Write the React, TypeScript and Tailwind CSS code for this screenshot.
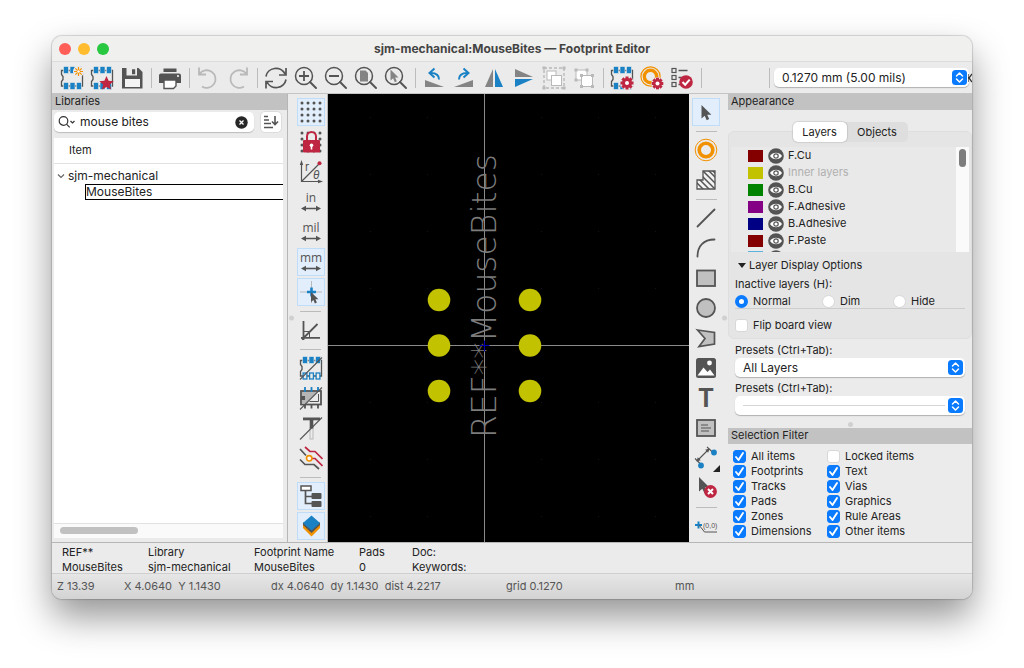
import React from 'react';
import { clsx } from 'clsx';

const DARK = '#545454';
const BLUE = '#1a81c4';
const RED = '#bf2641';
const ORANGE = '#f29100';
const GREY = '#848484';
const PALE = '#b9b9b9';

const Svg: React.FC<{ children: React.ReactNode }> = ({ children }) => (
    <svg viewBox="0 0 24 24" className="size-6 shrink-0" fill="none" aria-hidden="true">
        {children}
    </svg>
);

/* ---------- footprint based icons ---------- */

const Chip: React.FC<{ outline?: boolean }> = ({ outline }) => (
    <>
        <path d="M3 4.5H1.5V8.5L3 10.5V13.5L1.5 15.5V20H22.5V4.5Z" stroke={DARK} strokeWidth="1.3" />
        {[3.5, 10, 16.5].map((x) => (
            <rect key={x} x={x} y="0.5" width="5" height="7" fill={BLUE} stroke="#ebebeb" strokeWidth="0.6" />
        ))}
        {[3.5, 10, 16.5].map((x) =>
            outline ? (
                <rect key={x} x={x + 0.6} y="17" width="3.8" height="6" fill="#ebebeb" stroke={BLUE} strokeWidth="1.3" />
            ) : (
                <rect key={x} x={x} y="16.5" width="5" height="7" fill={BLUE} stroke="#ebebeb" strokeWidth="0.6" />
            )
        )}
    </>
);

const Gear: React.FC<{ x: number; y: number; r: number }> = ({ x, y, r }) => (
    <g transform={`translate(${x} ${y})`}>
        <circle r={r + 0.5} fill="#ebebeb" />
        {[0, 45, 90, 135].map((a) => (
            <rect key={a} x="-1.5" y={-r} width="3" height={r * 2} fill={RED} transform={`rotate(${a})`} />
        ))}
        <circle r={r - 1.6} fill={RED} />
        <circle r="2" fill="#fff" />
    </g>
);

const NewFootprint = () => (
    <Svg>
        <Chip />
        <circle cx="18.5" cy="5.5" r="5.5" fill="#ebebeb" />
        <path d="M18.5 1v9M14 5.5h9M15.3 2.3l6.4 6.4M21.7 2.3l-6.4 6.4" stroke={ORANGE} strokeWidth="1.2" />
        <circle cx="18.5" cy="5.5" r="1.3" fill="#fff" />
    </Svg>
);

const FootprintWizard = () => (
    <Svg>
        <Chip />
        <path
            d="M16.5 10l2.1 4.7 5.1.5-3.8 3.4 1.1 5-4.5-2.6-4.5 2.6 1.1-5-3.8-3.4 5.1-.5z"
            fill={RED}
        />
    </Svg>
);

const Save = () => (
    <Svg>
        <path d="M2 2H18.5L22.5 6V22.5H2Z" fill={DARK} />
        <path d="M6.5 2h10.500v7.500H6.500z" fill="#ebebeb" />
        <path d="M12 3.300h3.200v5H12z" fill={DARK} />
        <path d="M5 13h15v8H5z" fill="#f4f4f4" />
    </Svg>
);

const Print = () => (
    <Svg>
        <path d="M5.500 2.500h13V6h-13z" fill={DARK} />
        <path d="M3 7.500h18a2 2 0 0 1 2 2V17h-5v-3H6v3H1V9.500a2 2 0 0 1 2-2z" fill={DARK} />
        <path d="M6 14h12v6l-2.500 2.500H6z" fill="#fff" stroke={DARK} strokeWidth="1.4" />
        <circle cx="20" cy="10" r="1" fill="#fff" />
    </Svg>
);

const Undo = () => (
    <Svg>
        <path d="M3 1.500V8.500H10M3.500 8A8.800 8.800 0 1 1 6 20.500" stroke={PALE} strokeWidth="1.8" />
    </Svg>
);

const Redo = () => (
    <Svg>
        <path d="M21 1.500V8.500H14M20.500 8A8.800 8.800 0 1 0 18 20.500" stroke={PALE} strokeWidth="1.8" />
    </Svg>
);

const Refresh = () => (
    <Svg>
        <path
            d="M2 10.500A10 9.500 0 0 1 21 8M22 2V9H15M22 13.500A10 9.500 0 0 1 3 16M2 22.500V15.500H9"
            stroke={DARK}
            strokeWidth="1.7"
        />
    </Svg>
);

const Zoom: React.FC<{ children: React.ReactNode }> = ({ children }) => (
    <Svg>
        <circle cx="10" cy="10" r="8.500" stroke={DARK} strokeWidth="1.5" />
        <path d="M16 16l6 6" stroke={DARK} strokeWidth="2" strokeLinecap="round" />
        {children}
    </Svg>
);

const ZoomIn = () => (
    <Zoom>
        <path d="M5 10h10M10 5v10" stroke={DARK} strokeWidth="1.8" />
    </Zoom>
);
const ZoomOut = () => (
    <Zoom>
        <path d="M5 10h10" stroke={DARK} strokeWidth="1.8" />
    </Zoom>
);
const ZoomFit = () => (
    <Zoom>
        <path d="M6 4.500h5.500L14 7v8.500H6z" fill={GREY} />
    </Zoom>
);
const ZoomSelection = () => (
    <Zoom>
        <path d="M6.500 3.500v11l2.600-2.300 1.700 4 2-.9-1.700-3.800h3.400z" fill={GREY} />
    </Zoom>
);

const RotateLeft = () => (
    <Svg>
        <path d="M3 14v7h19z" fill={GREY} />
        <path d="M17 13.500C17 8.500 14 7 9 7" stroke={BLUE} strokeWidth="2" />
        <path d="M12.500 2.500L7.500 7l5 4.500" stroke={BLUE} strokeWidth="2" />
    </Svg>
);
const RotateRight = () => (
    <Svg>
        <path d="M21 14v7H2z" fill={GREY} />
        <path d="M7 13.500C7 8.500 10 7 15 7" stroke={BLUE} strokeWidth="2" />
        <path d="M11.500 2.500l5 4.500-5 4.500" stroke={BLUE} strokeWidth="2" />
    </Svg>
);
const MirrorH = () => (
    <Svg>
        <path d="M11 3v18H3z" fill={GREY} />
        <path d="M13 3v18h8z" fill={BLUE} />
    </Svg>
);
const MirrorV = () => (
    <Svg>
        <path d="M3 11h18L3 3z" fill={GREY} />
        <path d="M3 13h18L3 21z" fill={BLUE} />
    </Svg>
);

const Group = () => (
    <Svg>
        <rect x="2" y="2" width="20" height="20" stroke={PALE} strokeWidth="1.400" strokeDasharray="3 2" />
        {[[2, 2], [22, 2], [2, 22], [22, 22]].map(([x, y]) => (
            <rect key={`${x}-${y}`} x={x - 1.500} y={y - 1.500} width="3" height="3" fill={PALE} />
        ))}
        <rect x="5" y="5" width="9" height="9" fill="#fff" stroke={PALE} />
        <rect x="9.500" y="9.500" width="10" height="10" fill="#fff" stroke={PALE} />
    </Svg>
);
const Ungroup = () => (
    <Svg>
        <rect x="4" y="4" width="11" height="10" fill="#fff" stroke={PALE} />
        {[[4, 4], [15, 4], [4, 14]].map(([x, y]) => (
            <rect key={`${x}-${y}`} x={x - 1.500} y={y - 1.500} width="3" height="3" fill={PALE} />
        ))}
        <rect x="9.500" y="9.500" width="11" height="11" fill="#fff" stroke={PALE} />
        {[[9.5, 9.5], [20.5, 9.5], [9.5, 20.5], [20.5, 20.5]].map(([x, y]) => (
            <rect key={`${x}-${y}`} x={x - 1.500} y={y - 1.500} width="3" height="3" fill={PALE} />
        ))}
    </Svg>
);

const FootprintSettings = () => (
    <Svg>
        <Chip />
        <Gear x={17} y={17} r={6.5} />
    </Svg>
);
const PadSettings = () => (
    <Svg>
        <circle cx="10.500" cy="10.500" r="9.600" stroke={ORANGE} strokeWidth="1.200" />
        <circle cx="10.500" cy="10.500" r="6.200" stroke={ORANGE} strokeWidth="3.400" />
        <Gear x={17.5} y={17.5} r={5.8} />
    </Svg>
);
const Checker = () => (
    <Svg>
        {[2.5, 9.5, 16.5].map((y) => (
            <g key={y}>
                <rect x="2" y={y} width="4" height="4" stroke={DARK} strokeWidth="1.200" />
                <path d={`M8.500 ${y + 2}h9`} stroke={DARK} strokeWidth="1.300" />
            </g>
        ))}
        <circle cx="16" cy="16" r="6.800" fill={RED} />
        <path d="M12.500 16l2.700 2.700 4.500-5" stroke="#fff" strokeWidth="2" />
    </Svg>
);

/* ---------- left toolbar ---------- */

const dots = [3, 9, 15, 21];
const GridDots = () => (
    <>
        {dots.map((x) => dots.map((y) => <circle key={`${x}-${y}`} cx={x} cy={y} r="1.500" fill={DARK} />))}
    </>
);
const GridIcon = () => (
    <Svg>
        <GridDots />
    </Svg>
);
const GridLock = () => (
    <Svg>
        <GridDots />
        <path d="M8 12V6.500a4.500 4.500 0 0 1 9 0V12" stroke={RED} strokeWidth="2" fill="#ebebeb" />
        <rect x="4" y="10" width="17" height="12.500" rx="1" fill={RED} />
        <circle cx="12.500" cy="15.200" r="1.800" fill="#fff" />
        <path d="M11.700 15.500h1.600v4h-1.600z" fill="#fff" />
    </Svg>
);
const Polar = () => (
    <Svg>
        <path d="M2.500 3v18.500H21M2.500 21.500L20 4" stroke={DARK} strokeWidth="1.200" />
        <path d="M2.500 0L0.800 5h3.400zM24 21.500l-5-1.700v3.400z" fill={DARK} />
        <circle cx="20.500" cy="3.200" r="2" fill={RED} />
        <text x="6" y="11" fontSize="11" fontFamily="Inter, sans-serif" fill={DARK}>r</text>
        <text x="14" y="19" fontSize="12" fontStyle="italic" fontFamily="Roboto, sans-serif" fill={DARK}>θ</text>
    </Svg>
);
const Unit: React.FC<{ label: string }> = ({ label }) => (
    <Svg>
        <text x="12" y="12" fontSize="12" textAnchor="middle" fontFamily="'Open Sans', sans-serif" fill={DARK}>
            {label}
        </text>
        <path d="M5 18.500h14" stroke={DARK} strokeWidth="1.600" />
        <path d="M2 18.500l5-2.700v5.400zM22 18.500l-5-2.700v5.400z" fill={DARK} />
    </Svg>
);
const Crosshair = () => (
    <Svg>
        <path d="M1 12h22M12.500 1v22" stroke={PALE} strokeWidth="1" />
        <path d="M8 12h9M12.500 7.500v9" stroke={BLUE} strokeWidth="2.600" />
        <path d="M12 12v10l2.400-2 1.500 3.400 2-.9-1.500-3.300h3z" fill={DARK} />
    </Svg>
);
const Angle = () => (
    <Svg>
        <path d="M4.500 3v19M2 19.800h19M3 21.500L18.500 6" stroke={DARK} strokeWidth="1.800" />
        <path d="M5 13.500h5.500V20" stroke={DARK} strokeWidth="1" />
    </Svg>
);
const PadOutline = () => (
    <Svg>
        <Chip outline />
        <path d="M1 23.500L23 1.500" stroke={DARK} strokeWidth="1.100" />
    </Svg>
);
const GraphicOutline = () => (
    <Svg>
        <rect x="2" y="5" width="20" height="13.500" fill="#ebebeb" stroke={DARK} strokeWidth="1.800" />
        <path d="M3 6h15L6 18H3z" fill="#b5b5b5" />
        <path d="M19.500 8v7.500h-9" stroke={DARK} strokeWidth="1" />
        <path d="M2 10h4v4H2z" fill={DARK} />
        <path d="M6 1v5M12.500 1v5M19 1v4" stroke={BLUE} strokeWidth="1.800" />
        <path d="M6 18v4.500M12.500 18v4.500M19 18v4.500" stroke={DARK} strokeWidth="1.800" />
        <path d="M1 23.500L23 1.500" stroke={DARK} strokeWidth="1.100" />
    </Svg>
);
const TextOutline = () => (
    <Svg>
        <rect x="11" y="12" width="3" height="11" fill="#ebebeb" stroke={PALE} />
        <rect x="10.700" y="3" width="3.600" height="9.500" fill={DARK} />
        <rect x="4" y="1.500" width="17" height="2.800" fill={DARK} />
        <path d="M1 23.500L23 1.500" stroke={DARK} strokeWidth="1.100" />
    </Svg>
);
const HighContrast = () => (
    <Svg>
        <path d="M1 3l6 6.500M1 13.500l5 5h9l5 4.500" stroke={DARK} strokeWidth="1.700" />
        <path d="M6 1l5 4.500h5L23.500 13M13 12.500h3l7.500 7.500" stroke={RED} strokeWidth="1.700" />
        <circle cx="10.200" cy="12.300" r="2.700" fill="#fff" stroke={ORANGE} strokeWidth="1.700" />
    </Svg>
);
const Tree = () => (
    <Svg>
        <path d="M6.500 7v12.500H13M6.500 12.500H13" stroke={DARK} strokeWidth="1.700" />
        <rect x="2" y="2" width="10" height="4.500" fill="#fff" stroke={DARK} strokeWidth="1.500" />
        <rect x="12.500" y="9" width="10" height="6" rx="1" fill={DARK} />
        <rect x="12.500" y="17" width="10" height="6" rx="1" fill={DARK} />
    </Svg>
);
const LayersIcon = () => (
    <Svg>
        <path d="M4 14l8.500 8.500L21 14v-3H4z" fill={ORANGE} />
        <path d="M4 11l8.500 8L21 11V8.500H4z" fill={DARK} />
        <path d="M12.500 1.500L21 9l-8.500 7.500L4 9z" fill={BLUE} />
    </Svg>
);

/* ---------- right toolbar ---------- */

const SelectTool = () => (
    <Svg>
        <path d="M7.500 5v13.500l3.200-2.700 2 4.400 2.500-1.100-2-4.400h4.200z" fill={DARK} />
    </Svg>
);
const PadTool = () => (
    <Svg>
        <circle cx="12" cy="12" r="10.800" stroke={ORANGE} strokeWidth="1" />
        <circle cx="12" cy="12" r="6.800" stroke={ORANGE} strokeWidth="3.600" />
    </Svg>
);
const RuleArea = () => (
    <Svg>
        <clipPath id="rule-area">
            <path d="M9 3h12v18H3v-9h6z" />
        </clipPath>
        <g clipPath="url(#rule-area)">
            <path d="M9 3h12v18H3v-9h6z" fill="#f2f2f2" />
            <path
                d="M-4 8l18 18M0 6l18 18M4 4l18 18M8 2l18 18M12 0l18 18M16 0l12 12"
                stroke={DARK}
                strokeWidth="1.500"
            />
        </g>
        <path d="M9 3h12v18H3v-9h6z" stroke={DARK} strokeWidth="1.300" />
    </Svg>
);
const LineTool = () => (
    <Svg>
        <path d="M3.500 20.500l17-17" stroke={DARK} strokeWidth="1.800" strokeLinecap="round" />
    </Svg>
);
const ArcTool = () => (
    <Svg>
        <path d="M3.500 20.500C3.500 10 9.500 3.500 20.500 3.500" stroke={DARK} strokeWidth="1.800" strokeLinecap="round" />
    </Svg>
);
const RectTool = () => (
    <Svg>
        <rect x="3" y="4.500" width="18" height="15.500" fill="#c0c0c0" stroke={DARK} strokeWidth="1.800" />
    </Svg>
);
const CircleTool = () => (
    <Svg>
        <circle cx="12" cy="12" r="9" fill="#c0c0c0" stroke={DARK} strokeWidth="1.800" />
    </Svg>
);
const PolyTool = () => (
    <Svg>
        <path d="M3.500 4l17 2.500v11.500L5 20.500l6-8z" fill="#c0c0c0" stroke={DARK} strokeWidth="1.700" />
    </Svg>
);
const ImageTool = () => (
    <Svg>
        <rect x="2" y="2" width="20" height="20" rx="2.500" fill={DARK} />
        <path d="M3.500 19.500l6-8 4 4.500 2.500-2.500 4.500 6z" fill="#fff" />
        <circle cx="15.500" cy="7" r="2.400" fill="#fff" />
    </Svg>
);
const TextTool = () => (
    <svg viewBox="0 0 24 32" className="h-8 w-6 shrink-0" aria-hidden="true">
        <text x="12" y="25" fontSize="25" fontWeight="700" textAnchor="middle" fontFamily="Roboto, sans-serif" fill={DARK}>
            T
        </text>
    </svg>
);
const TextBoxTool = () => (
    <Svg>
        <rect x="3" y="4" width="18" height="16" fill="#c0c0c0" stroke={DARK} strokeWidth="1.800" />
        <path d="M7 9h7M7 12h10M7 15h8" stroke={DARK} strokeWidth="1.200" />
    </Svg>
);
const DimensionTool = () => (
    <Svg>
        <path d="M3.500 14.500L14.500 3.500M1 12.500l7 7M13 1l6.500 6" stroke={DARK} strokeWidth="1.100" />
        <path d="M2.500 15.500l1.300-4.200 3 3zM15.500 2.500l-1.300 4.200-3-3z" fill={DARK} />
        <circle cx="7" cy="19.500" r="2.900" fill={BLUE} />
        <circle cx="20" cy="6.500" r="2.900" fill={BLUE} />
    </Svg>
);
const DeleteTool = () => (
    <Svg>
        <path d="M5 1v14.500l3.300-2.800 2.200 4.600 2.500-1-2.200-4.800h4.700z" fill={DARK} />
        <circle cx="16.500" cy="15.500" r="6.400" fill={RED} />
        <path d="M14 13l5 5M19 13l-5 5" stroke="#fff" strokeWidth="2" />
    </Svg>
);
const AnchorTool = () => (
    <Svg>
        <path d="M1 11h7M4.500 7.500v7" stroke={BLUE} strokeWidth="2" />
        <path d="M5 11l5.500 7H23" stroke={DARK} strokeWidth="1" />
        <text x="9" y="14" fontSize="7" fontFamily="'Liberation Sans', sans-serif" fill={DARK}>(0,0)</text>
    </Svg>
);

interface Tool {
    name: string;
    icon: React.ReactNode;
    active?: boolean;
    more?: boolean;
}

// null puts a separator between two groups of buttons
type ToolItem = Tool | null;

const topTools: ToolItem[] = [
    { name: 'New footprint', icon: <NewFootprint /> },
    { name: 'Footprint wizard', icon: <FootprintWizard /> },
    { name: 'Save', icon: <Save /> },
    null,
    { name: 'Print', icon: <Print /> },
    null,
    { name: 'Undo', icon: <Undo /> },
    { name: 'Redo', icon: <Redo /> },
    null,
    { name: 'Refresh', icon: <Refresh /> },
    { name: 'Zoom in', icon: <ZoomIn /> },
    { name: 'Zoom out', icon: <ZoomOut /> },
    { name: 'Zoom to fit', icon: <ZoomFit /> },
    { name: 'Zoom to selection', icon: <ZoomSelection /> },
    null,
    { name: 'Rotate counterclockwise', icon: <RotateLeft /> },
    { name: 'Rotate clockwise', icon: <RotateRight /> },
    { name: 'Mirror horizontally', icon: <MirrorH /> },
    { name: 'Mirror vertically', icon: <MirrorV /> },
    { name: 'Group', icon: <Group /> },
    { name: 'Ungroup', icon: <Ungroup /> },
    null,
    { name: 'Footprint properties', icon: <FootprintSettings /> },
    { name: 'Pad properties', icon: <PadSettings /> },
    { name: 'Footprint checker', icon: <Checker /> },
    null,
];

const leftTools: ToolItem[] = [
    { name: 'Show grid', icon: <GridIcon />, active: true },
    { name: 'Grid overrides', icon: <GridLock /> },
    { name: 'Polar coordinates', icon: <Polar /> },
    { name: 'Inches', icon: <Unit label="in" /> },
    { name: 'Mils', icon: <Unit label="mil" /> },
    { name: 'Millimeters', icon: <Unit label="mm" />, active: true },
    { name: 'Full crosshair', icon: <Crosshair />, active: true },
    null,
    { name: 'Limit angles', icon: <Angle /> },
    null,
    { name: 'Sketch pads', icon: <PadOutline /> },
    { name: 'Sketch graphics', icon: <GraphicOutline /> },
    { name: 'Sketch text', icon: <TextOutline /> },
    { name: 'High contrast', icon: <HighContrast /> },
    null,
    { name: 'Footprint tree', icon: <Tree />, active: true },
    { name: 'Appearance manager', icon: <LayersIcon />, active: true },
];

const rightTools: ToolItem[] = [
    { name: 'Select', icon: <SelectTool />, active: true },
    null,
    { name: 'Add pad', icon: <PadTool /> },
    { name: 'Add rule area', icon: <RuleArea /> },
    null,
    { name: 'Draw line', icon: <LineTool /> },
    { name: 'Draw arc', icon: <ArcTool /> },
    { name: 'Draw rectangle', icon: <RectTool /> },
    { name: 'Draw circle', icon: <CircleTool /> },
    { name: 'Draw polygon', icon: <PolyTool /> },
    { name: 'Add image', icon: <ImageTool /> },
    { name: 'Add text', icon: <TextTool /> },
    { name: 'Add text box', icon: <TextBoxTool /> },
    { name: 'Add dimension', icon: <DimensionTool />, more: true },
    { name: 'Delete', icon: <DeleteTool /> },
    null,
    { name: 'Set anchor', icon: <AnchorTool /> },
];

const Toolbar: React.FC<{ items: ToolItem[]; vertical?: boolean }> = ({ items, vertical }) => (
    <div className={clsx('flex items-center gap-[2px]', vertical && 'flex-col')}>
        {items.map((item, i) =>
            item ? (
                <button
                    key={item.name}
                    type="button"
                    aria-label={item.name}
                    className={clsx(
                        'relative flex size-7 shrink-0 items-center justify-center border',
                        item.active ? 'border-[#bfdcf8] bg-[#e2eefc]' : 'border-transparent'
                    )}
                >
                    {item.icon}
                    {item.more && (
                        <svg viewBox="0 0 7 7" className="absolute -right-px -bottom-px size-[7px]" aria-hidden="true">
                            <path d="M7 0v7H0z" fill="#222" />
                        </svg>
                    )}
                </button>
            ) : (
                <span
                    key={i}
                    className={clsx(
                        'flex shrink-0 items-center justify-center',
                        vertical ? 'h-[6px] w-[21px]' : 'h-5 w-[6px]'
                    )}
                >
                    <span className={clsx('bg-[#bcbcbc]', vertical ? 'h-px w-full' : 'h-full w-px')} />
                </span>
            )
        )}
    </div>
);

const Stepper = () => (
    <svg viewBox="0 0 15 15" className="pointer-events-none mr-[2px] size-[15px] justify-self-end" fill="none" aria-hidden="true">
        <rect width="15" height="15" rx="3.500" fill="#0a7aff" />
        <path d="M4.500 6l3-3 3 3M4.500 9l3 3 3-3" stroke="#fff" strokeWidth="1.500" strokeLinecap="round" strokeLinejoin="round" />
    </svg>
);

const Dropdown: React.FC<{ id: string; value: string; label?: string }> = ({ id, value, label }) => (
    <div className="grid w-full items-center [&>*]:col-start-1 [&>*]:row-start-1">
        <select
            id={id}
            aria-label={label}
            className="h-[19px] w-full appearance-none rounded-[5px] bg-white pl-2 text-xs leading-[19px] shadow-[0_1px_1px_rgba(0,0,0,0.25)]"
        >
            <option>{value}</option>
        </select>
        {!value && <span className="pointer-events-none mr-5 ml-2 h-px bg-[#d5d5d5]" />}
        <Stepper />
    </div>
);

const Check: React.FC<{ label: string; checked?: boolean }> = ({ label, checked }) => (
    <label className="flex h-[15px] items-center gap-[5px] whitespace-nowrap">
        <span className="grid [&>*]:col-start-1 [&>*]:row-start-1">
            <input
                type="checkbox"
                defaultChecked={checked}
                className="peer size-[13px] appearance-none rounded-[3px] border border-[#d8d8d8] bg-white checked:border-[#0a7aff] checked:bg-[#0a7aff]"
            />
            <svg viewBox="0 0 13 13" className="pointer-events-none hidden size-[13px] peer-checked:block" fill="none" aria-hidden="true">
                <path d="M3 7l2.500 3L10 3" stroke="#fff" strokeWidth="1.900" strokeLinecap="round" strokeLinejoin="round" />
            </svg>
        </span>
        {label}
    </label>
);

const Radio: React.FC<{ label: string; checked?: boolean }> = ({ label, checked }) => (
    <label className="flex items-center gap-[5px]">
        <input
            type="radio"
            name="inactive"
            defaultChecked={checked}
            className="size-[13px] appearance-none rounded-full border border-[#d8d8d8] bg-white checked:border-4 checked:border-[#0a7aff]"
        />
        {label}
    </label>
);

const PaneTitle: React.FC<{ children: React.ReactNode }> = ({ children }) => (
    <h2 className="h-4 bg-[#c2c2c2] px-[3px] leading-[15px]">{children}</h2>
);

const LibraryPane = () => (
    <aside className="flex w-[236px] shrink-0 flex-col border-r border-[#b6b6b6]">
        <PaneTitle>Libraries</PaneTitle>
        <div className="flex items-center gap-[6px] py-px pr-[5px] pl-[2px]">
            <div className="flex h-5 flex-1 items-center rounded-[5px] bg-white px-1 shadow-[0_1px_1px_rgba(0,0,0,0.2)]">
                <svg viewBox="0 0 18 14" className="h-[14px] w-[18px]" fill="none" stroke="#333" strokeWidth="1.200" aria-hidden="true">
                    <circle cx="5.500" cy="6" r="4.300" />
                    <path d="M8.700 9.300l3 3M12.500 6l2 2 2-2" />
                </svg>
                <input
                    aria-label="Filter"
                    defaultValue="mouse bites"
                    className="ml-1 w-0 flex-1 bg-transparent text-xs outline-none"
                />
                <button type="button" aria-label="Clear" className="mr-[2px]">
                    <svg viewBox="0 0 13 13" className="block size-[13px]" aria-hidden="true">
                        <circle cx="6.500" cy="6.500" r="6.200" fill="#262626" />
                        <path d="M4.500 4.500l4 4M8.500 4.500l-4 4" stroke="#fff" strokeWidth="1.300" />
                    </svg>
                </button>
            </div>
            <button
                type="button"
                aria-label="Sort"
                className="flex size-[22px] items-center justify-center rounded-[5px] border border-[#dcdcdc] bg-white"
            >
                <svg viewBox="0 0 16 14" className="h-[14px] w-4" fill="none" stroke="#545454" strokeWidth="1.600" aria-hidden="true">
                    <path d="M1 1.500h4M1 5h5M1 8.500h7M1 12.500h9M12 1v8M9 6.500l3 3 3-3" />
                </svg>
            </button>
        </div>
        <div className="mt-1 mr-1 mb-1 ml-[2px] flex flex-1 flex-col bg-white">
            <div className="h-[26px] border-b border-[#e2e2e2] pl-[15px] leading-[25px]">Item</div>
            <ul className="flex-1 pt-1 text-xs">
                <li>
                    <div className="flex h-4 items-center pl-[3px]">
                        <svg viewBox="0 0 8 8" className="mr-[3px] size-2" fill="none" stroke="#666" strokeWidth="1.200" aria-hidden="true">
                            <path d="M1 2.500l3 3 3-3" />
                        </svg>
                        sjm-mechanical
                    </div>
                    <ul className="pl-[31px]">
                        <li className="h-4 border border-r-0 border-black leading-[14px]">MouseBites</li>
                    </ul>
                </li>
            </ul>
            <div className="h-[15px] border-t border-[#e2e2e2] bg-[#fafafa] px-[6px] py-[3px]">
                <div className="h-[7px] w-[36%] rounded-full bg-[#c1c1c1]" />
            </div>
        </div>
    </aside>
);

const gridX = [42, 99, 156, 213, 270, 327];
const gridY = [23, 80, 137, 194, 251, 308, 365, 422];

const Canvas = () => (
    <svg
        viewBox="0 0 361 448"
        preserveAspectRatio="xMidYMid slice"
        className="min-w-0 flex-1 bg-black"
        role="img"
        aria-label="MouseBites footprint"
    >
        {gridX.map((x) => gridY.map((y) => <rect key={`${x}-${y}`} x={x} y={y} width="1" height="1" fill="#141414" />))}
        <path d="M156.500 -400V900M-800 251.500H1200" stroke="#8a8a8a" />
        {[111, 202].map((x) =>
            [206, 251.5, 297].map((y) => <circle key={`${x}-${y}`} cx={x} cy={y} r="11.300" fill="#c2c200" />)
        )}
        <text
            transform="translate(168 344) rotate(-90)"
            fontSize="33"
            fontWeight="200"
            fontFamily="'DejaVu Sans', sans-serif"
            fill="#7c7c7c"
        >
            REF**MouseBites
        </text>
        <path d="M156.500 246.500v11M151.500 251.500h10" stroke="#0000b0" />
    </svg>
);

const layers = [
    { name: 'F.Cu', swatch: 'bg-[#840000]' },
    { name: 'Inner layers', swatch: 'bg-[#c2c200]', muted: true },
    { name: 'B.Cu', swatch: 'bg-[#008400]' },
    { name: 'F.Adhesive', swatch: 'bg-[#840084]' },
    { name: 'B.Adhesive', swatch: 'bg-[#000084]' },
    { name: 'F.Paste', swatch: 'bg-[#840000]' },
];

const Eye = () => (
    <svg viewBox="0 0 16 16" className="size-4" fill="none" aria-hidden="true">
        <circle cx="8" cy="8" r="7.800" fill={DARK} />
        <path d="M2 8c3-4.300 9-4.300 12 0-3 4.300-9 4.300-12 0z" fill="#fff" />
        <circle cx="8" cy="8" r="2.200" stroke={DARK} strokeWidth="1.200" />
    </svg>
);

const filters: [string, string][] = [
    ['All items', 'Locked items'],
    ['Footprints', 'Text'],
    ['Tracks', 'Vias'],
    ['Pads', 'Graphics'],
    ['Zones', 'Rule Areas'],
    ['Dimensions', 'Other items'],
];

const AppearancePane = () => (
    <aside className="flex w-[244px] shrink-0 flex-col">
        <PaneTitle>Appearance</PaneTitle>
        <section className="mt-[21px] rounded-md border border-[#dedede] bg-[#e5e5e5] pb-[5px]">
            <div className="mx-auto -mt-[10px] flex h-5 w-fit rounded-[5px] bg-[#dedede]">
                <button type="button" className="w-[54px] rounded-[5px] bg-white shadow-[0_0_1px_1px_rgba(0,0,0,0.1)]">
                    Layers
                </button>
                <button type="button" className="w-[61px]">Objects</button>
            </div>
            <div className="mx-[2px] mt-[5px] flex h-[105px] overflow-hidden bg-[#e9e9e9]">
                <ul className="flex-1 pl-[17px]">
                    {layers.map((layer) => (
                        <li key={layer.name} className={clsx('flex h-[17px] items-center', layer.muted && 'text-[#b0b0b0]')}>
                            <span className={clsx('h-3 w-[15px]', layer.swatch)} />
                            <button type="button" aria-label={`Toggle ${layer.name}`} className="mr-1 ml-[5px]">
                                <Eye />
                            </button>
                            {layer.name}
                        </li>
                    ))}
                    {/* top edge of the next row, the rest is scrolled out */}
                    <li className="flex gap-[5px] pt-px" aria-hidden="true">
                        <span className="mt-px h-3 w-[15px] bg-[#5cb3dd]" />
                        <Eye />
                    </li>
                </ul>
                <div className="w-[13px] bg-[#fafafa] px-[3px] pt-[2px]">
                    <div className="h-[18px] rounded-full bg-[#7d7d7d]" />
                </div>
            </div>
            <div className="px-[6px]">
                <button type="button" className="mt-[3px] flex h-5 items-center gap-[3px] pl-[3px]">
                    <svg viewBox="0 0 8 5" className="h-[5px] w-2" aria-hidden="true">
                        <path d="M0 0h8L4 5z" fill="#222" />
                    </svg>
                    Layer Display Options
                </button>
                <fieldset>
                    <legend className="h-[18px] leading-[18px]">Inactive layers (H):</legend>
                    <div className="grid h-4 grid-cols-[87px_71px_auto] items-center border-b border-[#cdcdcd]">
                        <Radio label="Normal" checked />
                        <Radio label="Dim" />
                        <Radio label="Hide" />
                    </div>
                </fieldset>
                <div className="mt-[9px]">
                    <Check label="Flip board view" />
                </div>
            </div>
        </section>
        <div className="px-[7px]">
            <label htmlFor="layer-preset" className="mt-[3px] block h-4 leading-4">Presets (Ctrl+Tab):</label>
            <Dropdown id="layer-preset" value="All Layers" />
            <label htmlFor="view-preset" className="mt-[3px] block h-4 leading-4">Presets (Ctrl+Tab):</label>
            <Dropdown id="view-preset" value="" />
        </div>
        <div className="flex h-[13px] items-end justify-center pb-px">
            <span className="size-[5px] rounded-full bg-[#d0d0d0]" />
        </div>
        <PaneTitle>Selection Filter</PaneTitle>
        <div className="grid grid-cols-[94px_auto] pt-[5px] pl-[5px]">
            {filters.map(([first, second]) => (
                <React.Fragment key={first}>
                    <Check label={first} checked />
                    <Check label={second} checked={second !== 'Locked items'} />
                </React.Fragment>
            ))}
        </div>
    </aside>
);

const info: [string, string][] = [
    ['REF**', 'MouseBites'],
    ['Library', 'sjm-mechanical'],
    ['Footprint Name', 'MouseBites'],
    ['Pads', '0'],
    ['Doc:', 'Keywords:'],
];

const App: React.FC = () => (
    <div className="flex min-h-screen flex-col bg-white px-[52px] pt-9 pb-[69px] font-['Inter','Liberation_Sans',sans-serif] text-[11px] text-[#222]">
        <main className="flex flex-1 flex-col overflow-hidden rounded-[10px] bg-[#ebebeb] shadow-[0_0_1px_1px_rgba(0,0,0,0.15),0_18px_36px_rgba(0,0,0,0.42)]">
            <header className="grid h-[26px] grid-cols-[1fr_auto_1fr] items-center border-b border-[#dcdcdc] bg-[#f0f0ee]">
                <div className="flex gap-[7px] pl-[7px]">
                    <button type="button" aria-label="Close" className="size-3 rounded-full bg-[#ff5f57]" />
                    <button type="button" aria-label="Minimize" className="size-3 rounded-full bg-[#febc2e]" />
                    <button type="button" aria-label="Maximize" className="size-3 rounded-full bg-[#28c840]" />
                </div>
                <h1 className="text-xs font-bold text-[#444]">sjm-mechanical:MouseBites — Footprint Editor</h1>
            </header>
            <div className="flex h-8 items-center justify-between border-b border-[#c4c4c4] pl-[6px]">
                <Toolbar items={topTools} />
                <div className="flex w-[203px] items-center gap-1">
                    <span className="h-5 w-px shrink-0 bg-[#bcbcbc]" />
                    <Dropdown id="grid" label="Grid" value="0.1270 mm (5.00 mils)" />
                    <svg viewBox="0 0 4 10" className="-ml-[5px] h-[10px] w-1 shrink-0" fill="none" stroke="#333" strokeWidth="1.300" aria-hidden="true">
                        <path d="M0 1v8M4 1L1 5l3 4" />
                    </svg>
                </div>
            </div>
            <div className="flex flex-1 border-b border-[#b6b6b6]">
                <LibraryPane />
                <div className="relative flex w-10 shrink-0 justify-center border-r border-[#b6b6b6] pt-1 pl-[6px]">
                    <Toolbar items={leftTools} vertical />
                    <span className="absolute top-1/2 left-px size-[5px] -translate-y-1/2 rounded-full bg-[#d0d0d0]" />
                </div>
                <Canvas />
                <div className="relative flex w-[39px] shrink-0 pt-1 pl-[3px]">
                    <Toolbar items={rightTools} vertical />
                    <span className="absolute top-1/2 right-px size-[5px] -translate-y-1/2 rounded-full bg-[#d0d0d0]" />
                </div>
                <AppearancePane />
            </div>
            <dl className="grid h-[30px] grid-cols-[86px_106px_105px_53px_auto] pt-[2px] pl-[10px] leading-[15px] whitespace-nowrap">
                {info.map(([term, value]) => (
                    <div key={term}>
                        <dt>{term}</dt>
                        <dd>{value}</dd>
                    </div>
                ))}
            </dl>
            <footer className="grid h-[26px] grid-cols-[67px_147px_235px_169px_auto] items-center border-t border-[#cfcfcf] bg-linear-to-b from-[#e6e6e6] to-[#d3d3d3] pl-[5px] whitespace-pre text-[#555]">
                <span>Z 13.39</span>
                <span>X 4.0640  Y 1.1430</span>
                <span>dx 4.0640  dy 1.1430  dist 4.2217</span>
                <span>grid 0.1270</span>
                <span>mm</span>
            </footer>
        </main>
    </div>
);

export default App;
